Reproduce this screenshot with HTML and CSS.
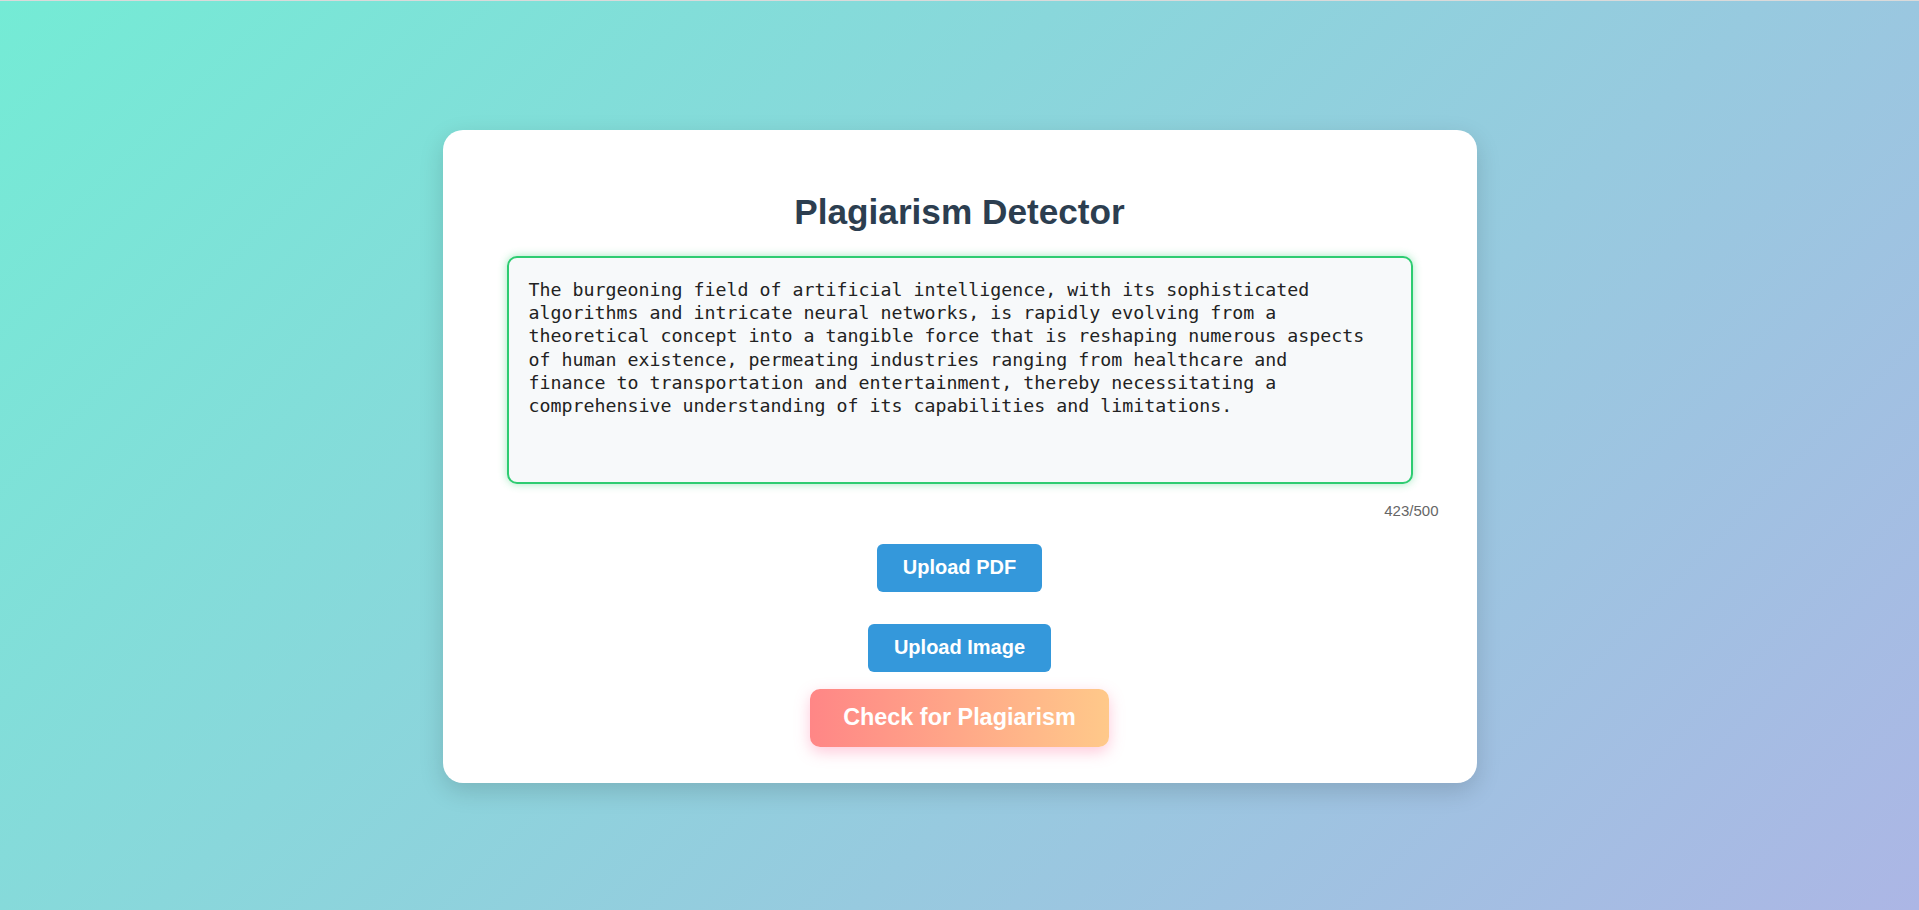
FILE: index.html
```html
<!DOCTYPE html>
<html lang="en">
<head>
<meta charset="utf-8">
<title>Plagiarism Detector</title>
<link rel="stylesheet" href="styles.css">
</head>
<body>
<div class="card">
  <h1 class="title">Plagiarism Detector</h1>
  <textarea class="input" spellcheck="false">The burgeoning field of artificial intelligence, with its sophisticated algorithms and intricate neural networks, is rapidly evolving from a theoretical concept into a tangible force that is reshaping numerous aspects of human existence, permeating industries ranging from healthcare and finance to transportation and entertainment, thereby necessitating a comprehensive understanding of its capabilities and limitations.</textarea>
  <div class="counter">423/500</div>
  <div class="actions">
    <button class="upload upload-pdf">Upload PDF</button>
    <button class="upload upload-img">Upload Image</button>
    <button class="check">Check for Plagiarism</button>
  </div>
</div>
</body>
</html>
```
FILE: styles.css
```css
* { box-sizing: border-box; }
html, body { margin: 0; padding: 0; }
body {
  height: 910px;
  border-top: 1px solid #dadada;
  padding-top: 2px;
  background: linear-gradient(135deg, #74ebd5 0%, #acb6e5 100%);
  display: flex;
  align-items: center;
  justify-content: center;
  font-family: "Liberation Sans", Arial, sans-serif;
}
.card {
  width: 1034px;
  background: #ffffff;
  border-radius: 20px;
  padding: 38px 38px 36px;
  box-shadow: 0 8px 25px rgba(0, 0, 0, 0.15);
  display: flex;
  flex-direction: column;
  align-items: center;
}
.title {
  margin: 23.6px 0;
  font-size: 35.2px;
  line-height: 40.4px;
  font-weight: 700;
  color: #2c3e50;
  text-align: center;
}
.input {
  display: block;
  width: 906px;
  height: 228px;
  padding: 20px 40px 20px 20px;
  border: 2px solid #2ecc71;
  border-radius: 10px;
  background: #f7f9fa;
  box-shadow: 0 0 8px rgba(46, 204, 113, 0.45);
  font-family: "DejaVu Sans Mono", "Liberation Mono", monospace;
  font-size: 18.27px;
  line-height: 23.33px;
  color: #222;
  resize: none;
  outline: none;
  overflow: hidden;
}
.counter {
  align-self: stretch;
  text-align: right;
  margin-top: 18px;
  font-size: 15px;
  line-height: 17px;
  color: #666;
}
.actions {
  display: flex;
  flex-direction: column;
  align-items: center;
  margin-top: 25px;
}
.upload {
  border: none;
  border-radius: 6px;
  background: #3498db;
  color: #fff;
  font-family: "Liberation Sans", Arial, sans-serif;
  font-weight: 700;
  font-size: 20px;
  line-height: 23px;
  padding: 12.5px 25.5px;
  cursor: pointer;
}
.upload-img { margin-top: 32px; }
.check {
  margin-top: 17px;
  border: none;
  border-radius: 10px;
  background: linear-gradient(90deg, #ff8686 0%, #ffc98a 100%);
  box-shadow: 0 5px 15px rgba(255, 100, 150, 0.35);
  color: #fff;
  font-family: "Liberation Sans", Arial, sans-serif;
  font-weight: 700;
  font-size: 23.4px;
  line-height: 27px;
  padding: 15.5px 33.5px;
  cursor: pointer;
}
```
